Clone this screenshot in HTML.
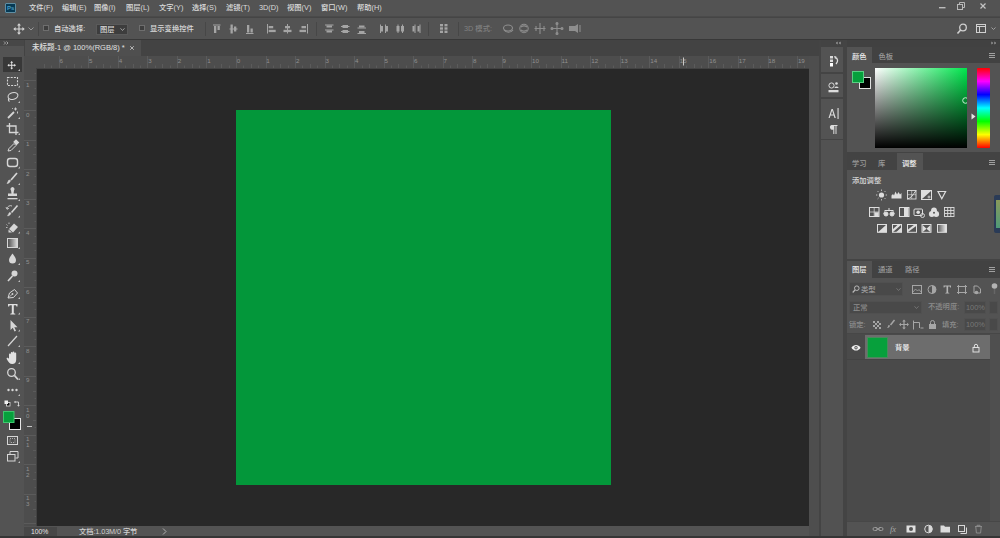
<!DOCTYPE html>
<html lang="zh-CN">
<head>
<meta charset="utf-8">
<title>Photoshop</title>
<style>
*{box-sizing:border-box;margin:0;padding:0}
html,body{width:1000px;height:538px;overflow:hidden;background:#535353}
body{position:relative;font-family:"Liberation Sans","Noto Sans CJK SC",sans-serif;font-size:9px;color:#d4d4d4;line-height:1}
.abs{position:absolute}
.t{position:absolute;white-space:nowrap;line-height:10px;height:10px;font-size:7.3px;color:#dadada;letter-spacing:0;font-weight:500}
.dim{color:#7d7d7d}
#menubar{left:0;top:0;width:1000px;height:17px;background:#535353;border-bottom:1px solid #4a4a4a}
#menubar .t{top:3px;color:#dcdcdc}
#optbar{left:0;top:17px;width:1000px;height:23px;background:#535353;border-top:1px solid #454545;border-bottom:1px solid #383838}
#optbar .t{top:6px}
#tabbar{left:24px;top:40px;width:797px;height:16px;background:#434343}
#toolbar{left:0;top:40px;width:24px;height:498px;background:#535353}
#canvas{left:37px;top:68px;width:772px;height:458px;background:#282828}
#doc{left:236px;top:110px;width:375px;height:375px;background:#03973a}
#hruler{left:24px;top:56px;width:785px;height:12px;background:#4d4d4d}
#vruler{left:24px;top:68px;width:13px;height:458px;background:#4d4d4d}
#status{left:24px;top:526px;width:797px;height:10px;background:#535353}
#bottomline{left:0;top:536px;width:1000px;height:2px;background:#353535}
svg{position:absolute;overflow:visible}
.cb{position:absolute;width:6px;height:6px;background:#3e3e3e;border:1px solid #6e6e6e}
.vsep{position:absolute;width:1px;background:#474747}
.tab{position:absolute;background:#535353}
.panelhead{position:absolute;background:#424242}
.field{position:absolute;background:#4a4a4a;border:1px solid #5e5e5e}
</style>
</head>
<body>
<!-- MENU BAR -->
<div id="menubar" class="abs">
  <div class="abs" style="left:5px;top:3px;width:11px;height:10px;background:#073a55;border:1px solid #5f8ea3;border-radius:1px"></div>
  <div class="t" style="left:7px;top:4px;font-size:6px;color:#4a9cc4;line-height:8px;height:8px;font-weight:bold;letter-spacing:0">Ps</div>
  <div class="t" style="left:29px">文件(F)</div>
  <div class="t" style="left:62px">编辑(E)</div>
  <div class="t" style="left:94px">图像(I)</div>
  <div class="t" style="left:126px">图层(L)</div>
  <div class="t" style="left:159px">文字(Y)</div>
  <div class="t" style="left:192px">选择(S)</div>
  <div class="t" style="left:226px">滤镜(T)</div>
  <div class="t" style="left:259px">3D(D)</div>
  <div class="t" style="left:287px">视图(V)</div>
  <div class="t" style="left:321px">窗口(W)</div>
  <div class="t" style="left:357px">帮助(H)</div>
  <!-- window controls -->
  <svg style="left:930px;top:-1px" width="70" height="17" viewBox="0 0 70 17">
    <rect x="9" y="8" width="6.500" height="1.400" fill="#bcbcbc"/>
    <rect x="27.5" y="5.5" width="5" height="5" fill="none" stroke="#b8b8b8" stroke-width="1"/>
    <path d="M29.5 5.5V3.5h5v5h-2" fill="none" stroke="#b8b8b8" stroke-width="1"/>
    <path d="M50.500 4.500l5 5M55.500 4.500l-5 5" stroke="#c4c4c4" stroke-width="1.200" fill="none"/>
  </svg>
</div>
<!-- OPTIONS BAR -->
<div id="optbar" class="abs"></div>
<!-- move icon -->
<svg style="left:13px;top:23px" width="12" height="12" viewBox="0 0 12 12">
  <path d="M6 0.3L8 2.6H6.6V5.4H9.4V4L11.7 6L9.4 8V6.6H6.6V9.4H8L6 11.7L4 9.4H5.4V6.6H2.6V8L0.3 6L2.6 4V5.4H5.4V2.6H4Z" fill="#d6d6d6"/>
</svg>
<svg style="left:28px;top:27px" width="6" height="4" viewBox="0 0 6 4"><path d="M0.5 0.5L3 3L5.5 0.5" stroke="#9a9a9a" stroke-width="1" fill="none"/></svg>
<div class="vsep" style="left:38px;top:22px;height:14px"></div>
<div class="cb" style="left:43px;top:25px"></div>
<div class="t" style="left:54px;top:24px">自动选择:</div>
<div class="abs" style="left:96px;top:24px;width:32px;height:11px;background:#3d3d3d;border:1px solid #5a5a5a"></div>
<div class="t" style="left:100px;top:25px;line-height:9px;height:9px">图层</div>
<svg style="left:120px;top:28px" width="5" height="3" viewBox="0 0 5 3"><path d="M0.5 0.3L2.5 2.5L4.5 0.3" stroke="#a8a8a8" stroke-width="0.9" fill="none"/></svg>
<div class="cb" style="left:139px;top:25px"></div>
<div class="t" style="left:150px;top:24px">显示变换控件</div>
<div class="vsep" style="left:205px;top:22px;height:14px"></div>
<!-- align icons group 1 -->
<svg style="left:0;top:18px" width="1000" height="21" viewBox="0 18 1000 21" fill="#a4a4a4">
  <g><rect x="213" y="24.500" width="7.500" height="1"/><rect x="214" y="26" width="2.300" height="7"/><rect x="217.500" y="26" width="2.300" height="4"/></g>
  <g><rect x="229.500" y="28.500" width="8" height="1"/><rect x="230.500" y="24.500" width="2.300" height="9"/><rect x="234" y="26.500" width="2.300" height="5"/></g>
  <g><rect x="246" y="33" width="7.500" height="1"/><rect x="247" y="25" width="2.300" height="7.500"/><rect x="250.500" y="28.500" width="2.300" height="4"/></g>
  <g><rect x="267" y="24" width="1" height="9.500"/><rect x="268.700" y="26" width="4.500" height="2.300"/><rect x="268.700" y="29.800" width="7" height="2.300"/></g>
  <g><rect x="287" y="24" width="1" height="9.500"/><rect x="285" y="26" width="5" height="2.300"/><rect x="283.500" y="29.800" width="8" height="2.300"/></g>
  <g><rect x="307" y="24" width="1" height="9.500"/><rect x="301.500" y="26" width="4.500" height="2.300"/><rect x="299.500" y="29.800" width="6.500" height="2.300"/></g>
  <!-- distribute -->
  <g><rect x="325" y="24.500" width="8.500" height="1"/><rect x="326.500" y="25.500" width="5.500" height="2"/><rect x="325" y="29.500" width="8.500" height="1"/><rect x="326.500" y="30.500" width="5.500" height="2"/></g>
  <g><rect x="341" y="26" width="8.500" height="1"/><rect x="342.500" y="25" width="5.500" height="3"/><rect x="341" y="31" width="8.500" height="1"/><rect x="342.500" y="30" width="5.500" height="3"/></g>
  <g><rect x="357.500" y="27.500" width="8.500" height="1"/><rect x="359" y="25.500" width="5.500" height="2"/><rect x="357.500" y="33" width="8.500" height="1"/><rect x="359" y="31" width="5.500" height="2"/></g>
  <g><rect x="380" y="24.500" width="1" height="8.500"/><rect x="381" y="26" width="2" height="5.500"/><rect x="385" y="24.500" width="1" height="8.500"/><rect x="386" y="26" width="2" height="5.500"/></g>
  <g><rect x="397.500" y="24.500" width="1" height="8.500"/><rect x="396.500" y="26" width="3" height="5.500"/><rect x="402" y="24.500" width="1" height="8.500"/><rect x="401" y="26" width="3" height="5.500"/></g>
  <g><rect x="414.500" y="24.500" width="1" height="8.500"/><rect x="412.500" y="26" width="2" height="5.500"/><rect x="419.500" y="24.500" width="1" height="8.500"/><rect x="417.500" y="26" width="2" height="5.500"/></g>
  <g><rect x="440" y="24" width="3" height="2.400"/><rect x="444.500" y="24" width="3" height="2.400"/><rect x="440" y="27.300" width="3" height="2.400"/><rect x="444.500" y="27.300" width="3" height="2.400"/><rect x="440" y="30.600" width="3" height="2.400"/><rect x="444.500" y="30.600" width="3" height="2.400"/></g>
</svg>
<div class="vsep" style="left:316px;top:22px;height:14px"></div>
<div class="vsep" style="left:428px;top:22px;height:14px"></div>
<div class="vsep" style="left:458px;top:22px;height:14px"></div>
<div class="t dim" style="left:464px;top:24px;color:#808080">3D 模式:</div>
<!-- 3D icons -->
<svg style="left:500px;top:18px" width="90" height="21" viewBox="0 0 90 21" fill="none" stroke="#8e8e8e" stroke-width="1.1">
  <ellipse cx="8" cy="10" rx="4.5" ry="3"/><path d="M4 12c2 3 7 3 9 0"/>
  <circle cx="24" cy="10.5" r="4.2"/><path d="M21 9c2-1.5 4-1.5 6 0M21 12c2 1.5 4 1.5 6 0"/>
  <path d="M40 5v11M36 8v5M44 8v5M34.5 10.5h11" />
  <path d="M57 6v9M52.500 10.500h9" /><circle cx="57" cy="5.500" r="1" fill="#8e8e8e"/><circle cx="57" cy="15.500" r="1" fill="#8e8e8e"/><circle cx="52" cy="10.500" r="1" fill="#8e8e8e"/><circle cx="62" cy="10.500" r="1" fill="#8e8e8e"/>
  <path d="M69 8h6l3-2v9l-3-2h-6z" fill="#8e8e8e" stroke="none"/><path d="M80 7v7" />
</svg>
<!-- right: search, workspace -->
<svg style="left:955px;top:22px" width="45" height="14" viewBox="0 0 45 14" fill="none" stroke="#d0d0d0">
  <circle cx="8" cy="5.500" r="3.300" stroke-width="1.300"/><path d="M5.600 8L2.500 11.500" stroke-width="1.600"/>
  <rect x="21.500" y="2.500" width="9" height="8" stroke-width="1"/><path d="M21.500 4.500h9M24.500 4.500v6" stroke-width="1"/>
  <path d="M36.500 5.500l2 2l2-2" stroke="#a0a0a0" stroke-width="1"/>
</svg>
<!-- TAB BAR -->
<div id="tabbar" class="abs"></div>
<div class="tab" style="left:25px;top:40px;width:116px;height:16px;background:#4f4f4f"></div>
<div class="t" style="left:32px;top:43px;font-size:7.5px;color:#e0e0e0">未标题-1 @ 100%(RGB/8) *</div>
<svg style="left:129px;top:45px" width="6" height="6" viewBox="0 0 6 6"><path d="M1.200 1.200l3.600 3.600M4.800 1.200l-3.600 3.600" stroke="#b4b4b4" stroke-width="1"/></svg>
<!-- TOOLBAR -->
<div id="toolbar" class="abs"></div>
<div class="abs" style="left:0;top:40px;width:24px;height:6px;background:#474747"></div>
<div class="abs" style="left:3px;top:57px;width:19px;height:15px;background:#383838"></div>
<svg style="left:0;top:0" width="24" height="538" viewBox="0 0 24 538" fill="none" stroke="#d6d6d6" stroke-width="1.1">
  <!-- header chevrons -->
  <path d="M4 41.500l1.500 1.500l-1.500 1.500M6.500 41.500l1.500 1.500l-1.500 1.500" stroke="#bdbdbd" stroke-width="0.8"/>
  <!-- move -->
  <g transform="translate(7.200 60.700) scale(0.75)"><path d="M6 0.300L8 2.600H6.600V5.400H9.400V4L11.700 6L9.400 8V6.600H6.600V9.400H8L6 11.700L4 9.400H5.400V6.600H2.600V8L0.300 6L2.600 4V5.400H5.400V2.600H4Z" fill="#e6e6e6" stroke="none"/></g>
  <!-- marquee -->
  <rect x="7.500" y="77.500" width="10" height="8" stroke-dasharray="2 1.200"/>
  <!-- lasso -->
  <ellipse cx="13" cy="96" rx="5" ry="3.300" transform="rotate(-15 13 96)"/><path d="M9 98.500c-1 1-0.500 2.500 0.500 3"/>
  <!-- wand -->
  <path d="M8 118l6-6" stroke-width="1.800"/><path d="M15.500 107.500v3M14 109h3M17.500 111.500v2M12 108l0.800 0.800" stroke-width="0.900"/>
  <!-- crop -->
  <path d="M9.500 123v9.500h9M6.500 126h9.500v9" stroke-width="1.300"/>
  <!-- eyedropper -->
  <path d="M8 151l1-2.500l5-5l2 2l-5 5z" stroke-width="1"/><path d="M14 142l2-2l2.500 2.500l-2 2z" fill="#d6d6d6"/>
  <!-- patch / healing -->
  <rect x="7.500" y="158.500" width="10" height="8" rx="2.500" stroke-width="1.400"/>
  <!-- brush -->
  <path d="M17 173l-6 7" stroke-width="1.700"/><path d="M10.500 180.500c-0.500 2-2 3-3.500 3c1-1 1-2.500 2-3.500z" fill="#d6d6d6" stroke-width="0.600"/>
  <!-- stamp -->
  <path d="M11 190.500a2 2 0 1 1 3 0l-0.500 3h3.500v2.500h-9v-2.500h3.500z" fill="#d6d6d6" stroke="none"/><rect x="7.500" y="198" width="10" height="1.300" fill="#d6d6d6" stroke="none"/>
  <!-- history brush -->
  <path d="M17.500 205.500l-6 7" stroke-width="1.600"/><path d="M11 213c-0.500 2-2 2.800-3.500 2.800c1-1 1-2.300 2-3.300z" fill="#d6d6d6" stroke-width="0.500"/><path d="M7 209a3.500 3.500 0 0 1 5-3" stroke-width="0.900"/><path d="M6 207l1 2.300l2-1" stroke-width="0.800"/>
  <!-- eraser -->
  <path d="M9 229l5-5.500l4 3.500l-5 5.500z" fill="#d6d6d6" stroke="none"/><path d="M8.500 229.500l3.500 3h-3.500z" fill="#d6d6d6" stroke="none"/><path d="M6.500 224.500l1 1M9 222.500v1.500M6 227.500h1.500" stroke-width="0.800"/>
  <!-- gradient -->
  <defs><linearGradient id="gt" x1="0" x2="1" y1="0" y2="0"><stop offset="0" stop-color="#4a4a4a"/><stop offset="1" stop-color="#e0e0e0"/></linearGradient></defs>
  <rect x="7.500" y="238.500" width="10" height="9" fill="url(#gt)" stroke-width="1"/>
  <!-- blur drop -->
  <path d="M12.500 253.500c2 3 3.500 4.500 3.500 6.500a3.500 3.500 0 0 1-7 0c0-2 1.500-3.500 3.500-6.500z" fill="#d6d6d6" stroke="none"/>
  <!-- dodge -->
  <circle cx="14.500" cy="273.500" r="3" fill="#d6d6d6" stroke="none"/><path d="M12.500 276l-4.500 5" stroke-width="1.600"/>
  <!-- pen -->
  <path d="M8 298l1.500-5l5-3.500l3 3.500l-4 4.500z" stroke-width="1"/><circle cx="12.500" cy="294" r="0.900" fill="#d6d6d6" stroke="none"/><path d="M8 298l4-3.500" stroke-width="0.700"/>
  <!-- T -->
  <path d="M8 304h9.500v2.500h-1l-0.500-1.300h-2.200v8l1.500 0.500v0.800h-5v-0.800l1.500-0.500v-8h-2.200l-0.500 1.300h-1z" fill="#e0e0e0" stroke="none"/>
  <!-- path selection arrow -->
  <path d="M10.500 320v10l2.300-2.200l1.700 3.700l1.500-0.700l-1.700-3.600h3.200z" fill="#d6d6d6" stroke="none"/>
  <!-- line -->
  <path d="M8 346l9-10" stroke-width="1.200"/>
  <!-- hand -->
  <path d="M9 358.500v-4a0.900 0.900 0 0 1 1.800 0v-1.500a0.900 0.900 0 0 1 1.800 0v-0.500a0.900 0.900 0 0 1 1.800 0v1a0.900 0.900 0 0 1 1.800 0v6c0 3-1.500 4.500-4 4.500c-2.500 0-3.500-1.500-5.500-5c-0.500-1 0.800-1.800 1.500-0.800z" fill="#e0e0e0" stroke="none"/>
  <!-- zoom -->
  <circle cx="11.500" cy="372.500" r="3.800" stroke-width="1.300"/><path d="M14.500 375.500l3.500 4" stroke-width="1.800"/>
  <!-- dots -->
  <circle cx="8.500" cy="390" r="1.200" fill="#d6d6d6" stroke="none"/><circle cx="12.500" cy="390" r="1.200" fill="#d6d6d6" stroke="none"/><circle cx="16.500" cy="390" r="1.200" fill="#d6d6d6" stroke="none"/>
  <!-- default colors / swap -->
  <rect x="6.500" y="402.500" width="3.500" height="3.500" fill="#111" stroke="#e0e0e0" stroke-width="0.800"/><rect x="4.500" y="400.500" width="3.500" height="3.500" fill="#f0f0f0" stroke="none"/>
  <path d="M15 402h3.500v3.500" stroke-width="0.900"/><path d="M13.800 402l1.700-1.300v2.600zM18.500 406.800l-1.300-1.700h2.600z" fill="#d6d6d6" stroke="none"/>
  <!-- bg / fg swatches -->
  <rect x="9.500" y="418.500" width="11" height="11" fill="#000" stroke="#e8e8e8" stroke-width="1"/>
  <rect x="3.500" y="411.500" width="10.500" height="11" fill="#07a03c" stroke="#3fc56e" stroke-width="1"/>
  <!-- quick mask -->
  <rect x="7.500" y="436.500" width="10" height="8" stroke-width="1"/><rect x="10" y="438.500" width="5" height="4" stroke-dasharray="1 1" stroke-width="0.700"/>
  <!-- screen mode -->
  <rect x="7.500" y="454.500" width="7.500" height="6.500" stroke-width="1"/><path d="M10 454v-2.500h8v6.500h-2.500" stroke-width="1"/>
  <path d="M20 69.0l-2 2h2zM20 85.5l-2 2h2zM20 101.0l-2 2h2zM20 117.0l-2 2h2zM20 133.0l-2 2h2zM20 150.0l-2 2h2zM20 166.5l-2 2h2zM20 183.0l-2 2h2zM20 199.0l-2 2h2zM20 215.5l-2 2h2zM20 231.5l-2 2h2zM20 247.0l-2 2h2zM20 263.0l-2 2h2zM20 280.0l-2 2h2zM20 297.0l-2 2h2zM20 312.5l-2 2h2zM20 329.5l-2 2h2zM20 345.0l-2 2h2zM20 362.0l-2 2h2zM20 378.0l-2 2h2zM20 394.0l-2 2h2zM20 461.0l-2 2h2z" fill="#bdbdbd" stroke="none"/>
</svg>
<!-- RULERS / CANVAS -->
<div id="hruler" class="abs"></div>
<div id="vruler" class="abs"></div>
<div class="abs" style="left:24px;top:56px;width:13px;height:12px;background:#4d4d4d"></div>
<div id="canvas" class="abs"></div>
<div id="doc" class="abs"></div>
<svg style="left:0;top:0" width="1000" height="538" viewBox="0 0 1000 538" font-family="Liberation Sans, sans-serif" font-size="6.2" fill="#919191">
<path d="M44.5 64.0v4.0M51.5 65.5v2.5M59.5 56v12M66.5 65.5v2.5M74.5 64.0v4.0M81.5 65.5v2.5M88.5 56v12M96.5 65.5v2.5M103.5 64.0v4.0M110.5 65.5v2.5M118.5 56v12M125.5 65.5v2.5M133.5 64.0v4.0M140.5 65.5v2.5M147.5 56v12M155.5 65.5v2.5M162.5 64.0v4.0M170.5 65.5v2.5M177.5 56v12M184.5 65.5v2.5M192.5 64.0v4.0M199.5 65.5v2.5M206.5 56v12M214.5 65.5v2.5M221.5 64.0v4.0M229.5 65.5v2.5M236.5 56v12M243.5 65.5v2.5M251.5 64.0v4.0M258.5 65.5v2.5M266.5 56v12M273.5 65.5v2.5M280.5 64.0v4.0M288.5 65.5v2.5M295.5 56v12M302.5 65.5v2.5M310.5 64.0v4.0M317.5 65.5v2.5M325.5 56v12M332.5 65.5v2.5M339.5 64.0v4.0M347.5 65.5v2.5M354.5 56v12M362.5 65.5v2.5M369.5 64.0v4.0M376.5 65.5v2.5M384.5 56v12M391.5 65.5v2.5M398.5 64.0v4.0M406.5 65.5v2.5M413.5 56v12M421.5 65.5v2.5M428.5 64.0v4.0M435.5 65.5v2.5M443.5 56v12M450.5 65.5v2.5M457.5 64.0v4.0M465.5 65.5v2.5M472.5 56v12M480.5 65.5v2.5M487.5 64.0v4.0M494.5 65.5v2.5M502.5 56v12M509.5 65.5v2.5M517.5 64.0v4.0M524.5 65.5v2.5M531.5 56v12M539.5 65.5v2.5M546.5 64.0v4.0M553.5 65.5v2.5M561.5 56v12M568.5 65.5v2.5M576.5 64.0v4.0M583.5 65.5v2.5M590.5 56v12M598.5 65.5v2.5M605.5 64.0v4.0M613.5 65.5v2.5M620.5 56v12M627.5 65.5v2.5M635.5 64.0v4.0M642.5 65.5v2.5M649.5 56v12M657.5 65.5v2.5M664.5 64.0v4.0M672.5 65.5v2.5M679.5 56v12M686.5 65.5v2.5M694.5 64.0v4.0M701.5 65.5v2.5M708.5 56v12M716.5 65.5v2.5M723.5 64.0v4.0M731.5 65.5v2.5M738.5 56v12M745.5 65.5v2.5M753.5 64.0v4.0M760.5 65.5v2.5M768.5 56v12M775.5 65.5v2.5M782.5 64.0v4.0M790.5 65.5v2.5M797.5 56v12M804.5 65.5v2.5" stroke="#5b5b5b" stroke-width="1" fill="none"/>
<text x="59.6" y="63.3">6</text>
<text x="89.1" y="63.3">5</text>
<text x="118.7" y="63.3">4</text>
<text x="148.2" y="63.3">3</text>
<text x="177.7" y="63.3">2</text>
<text x="207.3" y="63.3">1</text>
<text x="236.8" y="63.3">0</text>
<text x="266.3" y="63.3">1</text>
<text x="295.9" y="63.3">2</text>
<text x="325.4" y="63.3">3</text>
<text x="354.9" y="63.3">4</text>
<text x="384.4" y="63.3">5</text>
<text x="414.0" y="63.3">6</text>
<text x="443.5" y="63.3">7</text>
<text x="473.0" y="63.3">8</text>
<text x="502.6" y="63.3">9</text>
<text x="532.1" y="63.3">10</text>
<text x="561.6" y="63.3">11</text>
<text x="591.2" y="63.3">12</text>
<text x="620.7" y="63.3">13</text>
<text x="650.2" y="63.3">14</text>
<text x="679.8" y="63.3">15</text>
<text x="709.3" y="63.3">16</text>
<text x="738.8" y="63.3">17</text>
<text x="768.3" y="63.3">18</text>
<text x="797.9" y="63.3">19</text>
<path d="M34.5 73.5h2.5M24 80.5h13M34.5 88.5h2.5M33.0 95.5h4.0M34.5 103.5h2.5M24 110.5h13M34.5 117.5h2.5M33.0 125.5h4.0M34.5 132.5h2.5M24 140.5h13M34.5 147.5h2.5M33.0 154.5h4.0M34.5 162.5h2.5M24 169.5h13M34.5 176.5h2.5M33.0 184.5h4.0M34.5 191.5h2.5M24 199.5h13M34.5 206.5h2.5M33.0 213.5h4.0M34.5 221.5h2.5M24 228.5h13M34.5 236.5h2.5M33.0 243.5h4.0M34.5 250.5h2.5M24 258.5h13M34.5 265.5h2.5M33.0 272.5h4.0M34.5 280.5h2.5M24 287.5h13M34.5 295.5h2.5M33.0 302.5h4.0M34.5 309.5h2.5M24 317.5h13M34.5 324.5h2.5M33.0 331.5h4.0M34.5 339.5h2.5M24 346.5h13M34.5 354.5h2.5M33.0 361.5h4.0M34.5 368.5h2.5M24 376.5h13M34.5 383.5h2.5M33.0 391.5h4.0M34.5 398.5h2.5M24 405.5h13M34.5 413.5h2.5M33.0 420.5h4.0M34.5 427.5h2.5M24 435.5h13M34.5 442.5h2.5M33.0 450.5h4.0M34.5 457.5h2.5M24 464.5h13M34.5 472.5h2.5M33.0 479.5h4.0M34.5 487.5h2.5M24 494.5h13M34.5 501.5h2.5M33.0 509.5h4.0M34.5 516.5h2.5M24 523.5h13" stroke="#5b5b5b" stroke-width="1" fill="none"/>
<text x="26" y="87.0">1</text>
<text x="26" y="116.5">0</text>
<text x="26" y="146.0">1</text>
<text x="26" y="175.6">2</text>
<text x="26" y="205.1">3</text>
<text x="26" y="234.6">4</text>
<text x="26" y="264.1">5</text>
<text x="26" y="293.7">6</text>
<text x="26" y="323.2">7</text>
<text x="26" y="352.7">8</text>
<text x="26" y="382.3">9</text>
<text x="26" y="411.8">1</text>
<text x="26" y="417.8">0</text>
<text x="26" y="441.3">1</text>
<text x="26" y="447.3">1</text>
<text x="26" y="470.9">1</text>
<text x="26" y="476.9">2</text>
<text x="26" y="500.4">1</text>
<text x="26" y="506.4">3</text>
<path d="M37 68.5H809M36.500 68V526" stroke="#424242" stroke-width="1" fill="none"/>
<path d="M683.5 57.5v8M27 426.5h5" stroke="#c8c8c8" stroke-width="1" fill="none"/>
</svg>
<div id="status" class="abs"></div>
<div class="abs" style="left:24px;top:527px;width:33px;height:9px;background:#474747"></div>
<div class="t" style="left:31px;top:527px;font-size:6.8px;line-height:9px;height:9px;color:#e4e4e4;letter-spacing:0">100%</div>
<div class="t" style="left:79px;top:527px;font-size:7.3px;line-height:9px;height:9px;color:#d0d0d0;letter-spacing:-0.1px">文档:1.03M/0 字节</div>
<svg style="left:162px;top:528px" width="5" height="7" viewBox="0 0 5 7"><path d="M1 0.500l3 3l-3 3" stroke="#b0b0b0" stroke-width="1" fill="none"/></svg>
<div class="abs" style="left:809px;top:56px;width:12px;height:480px;background:#4e4e4e"></div>
<!-- RIGHT: ICON STRIP -->
<div class="abs" style="left:819px;top:40px;width:181px;height:498px;background:#444444"></div>
<div class="abs" style="left:821px;top:40px;width:22px;height:7px;background:#434343"></div>
<div class="abs" style="left:821px;top:47px;width:22px;height:25px;background:#535353"></div>
<div class="abs" style="left:821px;top:74px;width:22px;height:23px;background:#535353"></div>
<div class="abs" style="left:821px;top:99px;width:22px;height:40px;background:#535353"></div>
<div class="abs" style="left:821px;top:140px;width:22px;height:396px;background:#525252"></div>
<svg style="left:822px;top:41px" width="22" height="100" viewBox="0 0 22 100" fill="#dcdcdc" stroke="none">
  <path d="M15.500 0.500l-1.500 1.500l1.500 1.500zM18.500 0.500l-1.500 1.500l1.500 1.500z" fill="#b8b8b8"/>
  <!-- history -->
  <rect x="8" y="15" width="3" height="2.500"/><rect x="8" y="18.500" width="3" height="2.500"/><rect x="8" y="22" width="3" height="3.500" fill="#fff"/>
  <path d="M13 16.500c3 0.500 3.500 4 1 6.500" fill="none" stroke="#dcdcdc" stroke-width="1.300"/><path d="M12 15l2.500 0.500l-1.500 2.200z"/>
  <!-- properties -->
  <circle cx="9.500" cy="44.500" r="2.600" fill="none" stroke="#dcdcdc" stroke-width="1"/><circle cx="14.500" cy="42.500" r="1.300"/><path d="M12.500 47c0-2 4-2 4 0z"/><rect x="6.500" y="49" width="10" height="2.300"/>
  <!-- A| -->
  <path d="M6.500 77l3-9h1.300l3 9h-1.300l-0.800-2.500h-3.200l-0.800 2.500zM8.900 73.400h2.500l-1.250-4z"/><rect x="15.500" y="67" width="1.100" height="11"/>
  <!-- pilcrow -->
  <path d="M9.500 84h6v1h-1v8h-1v-8h-1.200v8h-1v-4.500a2.300 2.300 0 0 1-1.800-4.500z"/>
</svg>
<!-- RIGHT: PANEL 1 (COLOR) -->
<div class="abs" style="left:847px;top:40px;width:153px;height:7px;background:#414141"></div>
<svg style="left:991px;top:41px" width="8" height="4" viewBox="0 0 8 4"><path d="M0.500 0.500l1.500 1.500l-1.500 1.500zM3.500 0.500l1.500 1.500l-1.500 1.500z" fill="#b8b8b8"/></svg>
<div class="abs" style="left:847px;top:47px;width:153px;height:16px;background:#424242"></div>
<div class="abs" style="left:847px;top:63px;width:153px;height:89px;background:#535353"></div>
<div class="tab" style="left:847px;top:47px;width:25px;height:17px"></div>
<div class="t" style="left:852px;top:51.5px;color:#f0f0f0">颜色</div>
<div class="t" style="left:878.5px;top:51.5px;color:#9a9a9a">色板</div>
<svg style="left:989px;top:53px" width="8" height="7" viewBox="0 0 8 7"><path d="M0 0.500h6M0 2.500h6M0 4.500h6" stroke="#a0a0a0" stroke-width="1"/></svg>
<!-- swatches -->
<div class="abs" style="left:859px;top:77px;width:12px;height:12px;background:#000;border:1px solid #e0e0e0"></div>
<div class="abs" style="left:852px;top:71px;width:12px;height:12px;background:#06a03c;border:1px solid #58cf83"></div>
<!-- color field -->
<div class="abs" style="left:875px;top:68px;width:92px;height:80px;background:linear-gradient(to bottom,rgba(0,0,0,0) 0%,#000 100%),linear-gradient(to right,#fff 0%,#00e64d 100%)"></div>
<svg style="left:960px;top:95px;overflow:hidden" width="7" height="10" viewBox="0 0 7 10"><circle cx="5.500" cy="5.500" r="2.800" stroke="#c9f0d4" stroke-width="1" fill="none"/></svg>
<!-- hue strip -->
<div class="abs" style="left:977px;top:68px;width:13px;height:80px;border-radius:1px;background:linear-gradient(to bottom,#ff0000 0%,#ff00ff 16.600%,#0000ff 33.300%,#00ffff 50%,#00ff00 66.600%,#ffff00 83.300%,#ff0000 100%)"></div>
<svg style="left:971px;top:113px" width="5" height="7" viewBox="0 0 5 7"><path d="M0.500 0.500l4 3l-4 3z" fill="#e8e8e8"/></svg>
<!-- RIGHT: PANEL 2 (ADJUSTMENTS) -->
<div class="abs" style="left:847px;top:152px;width:153px;height:18px;background:#434343"></div>
<div class="abs" style="left:847px;top:170px;width:153px;height:89px;background:#535353"></div>
<div class="tab" style="left:897px;top:153px;width:26px;height:18px"></div>
<div class="t" style="left:852px;top:159px;color:#9a9a9a">学习</div>
<div class="t" style="left:878px;top:159px;color:#9a9a9a">库</div>
<div class="t" style="left:902px;top:159px;color:#f0f0f0">调整</div>
<svg style="left:989px;top:160px" width="8" height="7" viewBox="0 0 8 7"><path d="M0 0.500h6M0 2.500h6M0 4.500h6" stroke="#a0a0a0" stroke-width="1"/></svg>
<div class="t" style="left:852px;top:176px;color:#d8d8d8">添加调整</div>
<!-- adjustment icons -->
<svg style="left:847px;top:170px" width="153" height="89" viewBox="847 170 153 89" fill="#dedede" stroke="none">
  <!-- row1 y=195 -->
  <g><circle cx="881.500" cy="195" r="2.600"/><path d="M881.500 190.800v-1.200M881.500 199.200v1.200M877.300 195h-1.200M885.700 195h1.200M878.500 192l-0.800-0.800M884.500 198l0.800 0.800M878.500 198l-0.800 0.800M884.500 192l0.800-0.800" stroke="#dedede" stroke-width="0.900" fill="none"/></g>
  <path d="M891.500 198.500v-3l1.500-1.500l1 1.500l1.500-4l1.500 3l1.500-2.500l1.500 2.500l1.500-1.500v5.500z"/>
  <g fill="none" stroke="#dedede" stroke-width="0.900"><rect x="907.500" y="190.500" width="8.500" height="8.500"/><path d="M907.500 194.700h8.500M911.700 190.500v8.500" stroke-width="0.600"/><path d="M907.500 199c3.500-1 5.500-4 8.500-8.500" stroke-width="1"/></g>
  <g><rect x="921.500" y="190.500" width="10" height="9" fill="none" stroke="#dedede" stroke-width="1"/><path d="M922 199l9-8h-9z"/><path d="M927.500 197h3M929 195.500v3" stroke="#dedede" stroke-width="0.800"/></g>
  <path d="M938 191.500h7.600l-3.800 7.200z" fill="none" stroke="#dedede" stroke-width="1.200"/>
  <!-- row2 y=212 -->
  <g><rect x="869.500" y="207.500" width="9.500" height="9" fill="none" stroke="#dedede" stroke-width="1"/><path d="M869.500 212h9.500M874.200 207.500v9" stroke="#dedede" stroke-width="0.700"/><rect x="874.500" y="212.300" width="4.200" height="4"/></g>
  <g fill="none" stroke="#dedede" stroke-width="1"><path d="M889 208v2M884.500 210.500h9"/><circle cx="886" cy="214" r="2" fill="#dedede"/><circle cx="892" cy="214" r="2" fill="#dedede"/><path d="M885 211l-1.500 3M893 211l1.500 3" stroke-width="0.700"/></g>
  <g><rect x="899.500" y="207.500" width="9.500" height="9" fill="none" stroke="#dedede" stroke-width="1"/><rect x="904" y="208" width="4.500" height="8"/></g>
  <g><rect x="914" y="209" width="8.500" height="6.500" rx="1" fill="none" stroke="#dedede" stroke-width="1"/><circle cx="918.200" cy="212.300" r="1.800"/><circle cx="922.500" cy="215.500" r="2" fill="none" stroke="#dedede" stroke-width="0.900"/></g>
  <g><circle cx="934" cy="210.300" r="2.900"/><circle cx="931.800" cy="214" r="2.900"/><circle cx="936.200" cy="214" r="2.900"/><circle cx="934" cy="212.800" r="1" fill="#535353"/></g>
  <g fill="none" stroke="#dedede" stroke-width="0.900"><rect x="944.500" y="207.500" width="9.500" height="9"/><path d="M944.500 210.500h9.500M944.500 213.500h9.500M947.700 207.500v9M950.800 207.500v9"/></g>
  <!-- row3 y=228.500 -->
  <g><rect x="877.500" y="224.500" width="9" height="7.800" fill="none" stroke="#dedede" stroke-width="1"/><path d="M878 232.300l8.500-7.800v7.800z"/></g>
  <g><rect x="892.500" y="224.500" width="9" height="7.800" fill="none" stroke="#dedede" stroke-width="1"/><path d="M893 229l5-4.500h3.500l-8.500 7.500zM896 232.300l5.500-5v5z"/></g>
  <g><rect x="907.500" y="224.500" width="9" height="7.800" fill="none" stroke="#dedede" stroke-width="1"/><path d="M908 232l8.500-6.300v-1.200h-2l-6.500 5z"/></g>
  <g><rect x="922" y="224.500" width="9" height="7.800" fill="none" stroke="#dedede" stroke-width="1"/><path d="M922.500 225l4 3.700l4-3.700v7.300l-4-3.600l-4 3.600z"/></g>
  <defs><linearGradient id="ga" x1="0" x2="1" y1="0" y2="0"><stop offset="0" stop-color="#535353"/><stop offset="1" stop-color="#f0f0f0"/></linearGradient></defs>
  <g><rect x="937.500" y="224.500" width="9" height="7.800" fill="url(#ga)" stroke="#dedede" stroke-width="1"/></g>
</svg>
<!-- floating thing at right edge -->
<div class="abs" style="left:994px;top:195px;width:8px;height:38px;background:#2a3b57;border-radius:2px 0 0 2px"></div>
<div class="abs" style="left:996px;top:200px;width:4px;height:28px;background:linear-gradient(to bottom,#8a9a5a,#4f9a78)"></div>
<!-- RIGHT: PANEL 3 (LAYERS) -->
<div class="abs" style="left:847px;top:261px;width:153px;height:17px;background:#424242"></div>
<div class="abs" style="left:847px;top:278px;width:153px;height:258px;background:#535353"></div>
<div class="tab" style="left:847px;top:261px;width:25px;height:18px"></div>
<div class="t" style="left:852px;top:265px;color:#f0f0f0">图层</div>
<div class="t" style="left:878px;top:265px;color:#9a9a9a">通道</div>
<div class="t" style="left:905px;top:265px;color:#9a9a9a">路径</div>
<svg style="left:989px;top:267px" width="8" height="7" viewBox="0 0 8 7"><path d="M0 0.500h6M0 2.500h6M0 4.500h6" stroke="#a0a0a0" stroke-width="1"/></svg>
<!-- filter row -->
<div class="field" style="left:849px;top:282px;width:54px;height:14px;background:#494949;border-color:#505050"></div>
<svg style="left:852px;top:285px" width="8" height="8" viewBox="0 0 8 8" fill="none" stroke="#b8b8b8"><circle cx="4.800" cy="3.200" r="2.300" stroke-width="1"/><path d="M3 5l-2.300 2.500" stroke-width="1.200"/></svg>
<div class="t" style="left:861px;top:285px;color:#9c9c9c">类型</div>
<svg style="left:896px;top:288px" width="5" height="3" viewBox="0 0 5 3"><path d="M0.500 0.300L2.500 2.500L4.500 0.300" stroke="#777" stroke-width="0.900" fill="none"/></svg>
<svg style="left:910px;top:282px" width="90" height="15" viewBox="910 282 90 15" fill="none" stroke="#a6a6a6" stroke-width="1">
  <rect x="912.500" y="285.500" width="9" height="8"/><path d="M913 292l2.500-3l2 2l1.500-1.500l2 2.500" stroke-width="0.800"/>
  <circle cx="932" cy="289.500" r="4"/><path d="M932 285.500a4 4 0 0 1 0 8z" fill="#a6a6a6" stroke="none"/>
  <path d="M943.500 285.500h7.500v2h-0.800l-0.400-1h-1.700v6l1.200 0.400v0.600h-4v-0.600l1.200-0.400v-6h-1.700l-0.400 1h-0.800z" fill="#b4b4b4" stroke="none"/>
  <rect x="958.500" y="286.500" width="7" height="6"/><path d="M957 286.500h1.500M965.500 286.500h1.500M957 292.500h1.500M965.500 292.500h1.500M958.500 285v1.500M965.500 285v1.500M958.500 292.500v1.500M965.500 292.500v1.500" stroke-width="1.100"/>
  <path d="M974 293v-7h3.500l3 3v4z"/><circle cx="976.500" cy="292.500" r="1.800" fill="#a6a6a6" stroke="none"/>
  <circle cx="994.500" cy="286" r="2.800" fill="#b4b4b4" stroke="none"/><path d="M994.500 289v5" stroke="#666" stroke-width="1.500"/>
</svg>
<!-- blend row -->
<div class="field" style="left:849px;top:301px;width:73px;height:13px;background:#494949;border-color:#505050"></div>
<div class="t" style="left:853px;top:303px;color:#8c8c8c">正常</div>
<svg style="left:914px;top:306px" width="5" height="3" viewBox="0 0 5 3"><path d="M0.500 0.300L2.500 2.500L4.500 0.300" stroke="#777" stroke-width="0.900" fill="none"/></svg>
<div class="t" style="left:928px;top:302px;color:#8c8c8c">不透明度:</div>
<div class="field" style="left:964px;top:301px;width:22px;height:13px;background:#494949;border-color:#505050"></div>
<div class="t" style="left:966px;top:303px;color:#777;font-size:7.4px">100%</div>
<div class="field" style="left:989px;top:301px;width:9px;height:13px;background:#494949;border-color:#505050"></div>
<!-- lock row -->
<div class="t" style="left:849px;top:320px;color:#8c8c8c">锁定:</div>
<svg style="left:870px;top:318px" width="70" height="14" viewBox="870 318 70 14" fill="#a6a6a6" stroke="none">
  <path d="M873 321h2v2h-2zM877 321h2v2h-2zM875 323h2v2h-2zM879 323h2v2h-2zM873 325h2v2h-2zM877 325h2v2h-2zM875 327h2v2h-2zM879 327h2v2h-2z"/>
  <path d="M894.500 320l-4 5" stroke="#a6a6a6" stroke-width="1.500" fill="none"/><path d="M890 325.500c-0.300 1.800-1.500 2.500-3 2.500c1-1 1-2 1.500-3z"/>
  <path d="M904 319.500l1.800 2h-1.200v2.400h2.400v-1.200l2 1.800l-2 1.800v-1.200h-2.400v2.400h1.200l-1.800 2l-1.800-2h1.200v-2.400h-2.400v1.200l-2-1.800l2-1.800v1.200h2.400v-2.400h-1.200z"/>
  <path d="M913.500 322.500h6v5.500M913.500 320.500v9M920.500 328h3" stroke="#a6a6a6" stroke-width="1" fill="none"/>
  <rect x="929" y="324" width="7" height="5"/><path d="M930.500 324v-1.500a2 2 0 0 1 4 0v1.500" stroke="#a6a6a6" stroke-width="1" fill="none"/>
</svg>
<div class="t" style="left:942px;top:320px;color:#8c8c8c">填充:</div>
<div class="field" style="left:964px;top:318px;width:22px;height:13px;background:#494949;border-color:#505050"></div>
<div class="t" style="left:966px;top:320px;color:#777;font-size:7.4px">100%</div>
<div class="field" style="left:989px;top:318px;width:9px;height:13px;background:#494949;border-color:#505050"></div>
<!-- layer row -->
<div class="abs" style="left:847px;top:334px;width:143px;height:187px;background:#4a4a4a"></div>
<div class="abs" style="left:990px;top:334px;width:10px;height:187px;background:#4f4f4f"></div>
<div class="abs" style="left:847px;top:333px;width:153px;height:1px;background:#474747"></div>
<div class="abs" style="left:865px;top:335px;width:125px;height:24px;background:#6d6d6d"></div>
<div class="abs" style="left:847px;top:359px;width:143px;height:1px;background:#444"></div>
<svg style="left:851px;top:344px" width="10" height="7.5" viewBox="0 0 12 9"><path d="M0.500 4.500c2.500-4.500 8.500-4.500 11 0c-2.500 4.500-8.500 4.500-11 0z" fill="#f0f0f0"/><circle cx="6" cy="4.500" r="2" fill="#535353"/><circle cx="6" cy="4.500" r="0.900" fill="#f0f0f0"/></svg>
<div class="abs" style="left:867px;top:337px;width:21px;height:21px;background:#07a03c;border:1px solid #4a8a5c"></div>
<div class="t" style="left:895px;top:343px;color:#f4f4f4">背景</div>
<svg style="left:972px;top:343px" width="8" height="10" viewBox="0 0 8 10" fill="none" stroke="#e0e0e0"><rect x="1" y="4.500" width="6" height="4.500" stroke-width="1"/><path d="M2.300 4.500v-1.500a1.700 1.700 0 0 1 3.400 0v1.500" stroke-width="1"/></svg>
<!-- bottom bar -->
<div class="abs" style="left:847px;top:521px;width:153px;height:1px;background:#474747"></div>
<svg style="left:870px;top:522px" width="120" height="14" viewBox="870 522 120 14" fill="none" stroke="#9a9a9a" stroke-width="1">
  <rect x="873" y="527.500" width="4.500" height="3" rx="1.500"/><rect x="878.500" y="527.500" width="4.500" height="3" rx="1.500"/><path d="M876 529h4"/>
  <text x="890" y="532" font-family="Liberation Serif, serif" font-style="italic" font-size="8.500" fill="#a8a8a8" stroke="none">fx</text>
  <rect x="906.500" y="525.500" width="9" height="7" fill="#e0e0e0" stroke="none"/><circle cx="911" cy="529" r="2" fill="#535353" stroke="none"/>
  <circle cx="928.500" cy="529" r="3.800" stroke="#d8d8d8"/><path d="M928.500 525.200a3.800 3.800 0 0 1 0 7.600z" fill="#d8d8d8" stroke="none"/>
  <path d="M940.500 525.500h3.500l1 1.200h5v5.800h-9.500z" fill="#dcdcdc" stroke="none"/>
  <rect x="958.500" y="525.500" width="6" height="6" stroke="#d8d8d8"/><path d="M960.500 533.500h6v-6" stroke="#d8d8d8"/>
  <path d="M975 526.500h7M977 526.500v-1.200h3v1.200M975.800 527l0.600 6h4.200l0.600-6" stroke="#8a8a8a"/>
</svg>
<div id="bottomline" class="abs"></div>
</body>
</html>
